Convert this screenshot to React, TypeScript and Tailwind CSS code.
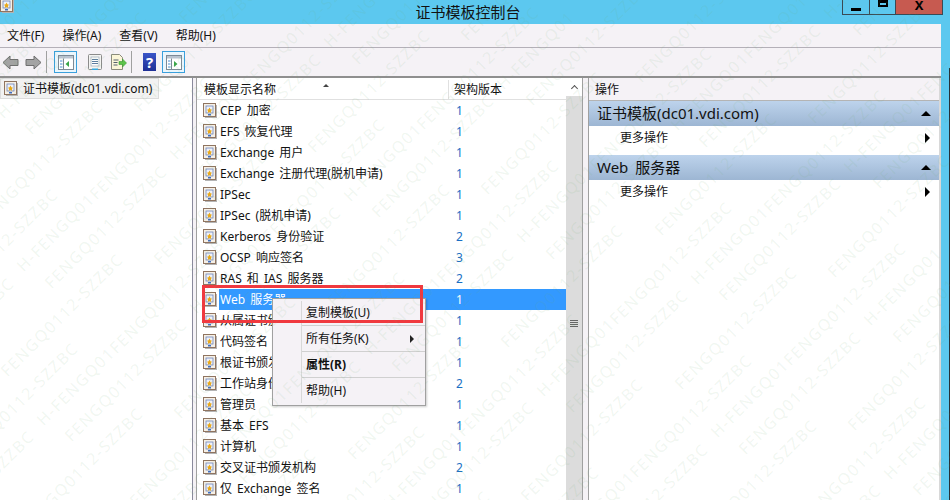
import React from "react";

const FONT = '"Noto Sans", "Noto Sans CJK SC", sans-serif';

const templates = [
  { name: "CEP 加密", ver: "1" },
  { name: "EFS 恢复代理", ver: "1" },
  { name: "Exchange 用户", ver: "1" },
  { name: "Exchange 注册代理(脱机申请)", ver: "1" },
  { name: "IPSec", ver: "1" },
  { name: "IPSec (脱机申请)", ver: "1" },
  { name: "Kerberos 身份验证", ver: "2" },
  { name: "OCSP 响应签名", ver: "3" },
  { name: "RAS 和 IAS 服务器", ver: "2" },
  { name: "Web 服务器", ver: "1", selected: true },
  { name: "从属证书颁发机构", ver: "1" },
  { name: "代码签名", ver: "1" },
  { name: "根证书颁发机构", ver: "1" },
  { name: "工作站身份验证", ver: "2" },
  { name: "管理员", ver: "1" },
  { name: "基本 EFS", ver: "1" },
  { name: "计算机", ver: "1" },
  { name: "交叉证书颁发机构", ver: "2" },
  { name: "仅 Exchange 签名", ver: "1" },
];

function TemplateIcon() {
  return (
    <svg width="14" height="15" viewBox="0 0 14 15" className="shrink-0">
      <rect x="2" y="2" width="12" height="13" fill="#b4b4b4" />
      <rect x="0.5" y="0.5" width="12" height="13" fill="#f6f0e6" stroke="#8f7460" />
      <rect x="3" y="3" width="7" height="7" fill="#eef1f8" stroke="#6d86bc" strokeWidth="0.8" />
      <path d="M6.500 4.500l.9 1.800 1.600.4-1.100 1.200.4 2-1.800-1-1.800 1 .4-2L4 6.700l1.600-.4z" fill="#e9a91a" />
      <rect x="5" y="11" width="3" height="1.500" fill="#3f6fc0" />
    </svg>
  );
}

function ArrowIcon({ flip }: { flip?: boolean }) {
  return (
    <svg width="17" height="15" viewBox="0 0 17 15" style={flip ? { transform: "scaleX(-1)" } : undefined}>
      <path d="M1 7.500L8 1v3.500h8v6H8V14z" fill="#a3a3a3" stroke="#6f6f6f" />
    </svg>
  );
}

function PaneIcon({ side }: { side: "left" | "right" }) {
  return (
    <svg width="16" height="15" viewBox="0 0 16 15">
      <rect x="0.500" y="0.500" width="15" height="14" fill="#fff" stroke="#7d8a96" />
      <rect x="1" y="1" width="14" height="2.500" fill="#b9c4d0" />
      <path d="M5.500 3.500v11" stroke="#7d8a96" />
      <path d="M2 6h2.500M2 9h2.500M2 12h2.500" stroke="#4c8ed0" />
      {side === "left" ? <path d="M11 6v6l-3.500-3z" fill="#3aa648" /> : <path d="M8 6v6l3.500-3z" fill="#3aa648" />}
    </svg>
  );
}

function ToggleButton({ side }: { side: "left" | "right" }) {
  return (
    <div className="flex h-[22px] w-[23px] items-center justify-center border border-[#3aa0dc] bg-[#eaf6fd]">
      <PaneIcon side={side} />
    </div>
  );
}

function SheetIcon() {
  return (
    <svg width="16" height="17" viewBox="0 0 16 17">
      <rect x="1.500" y="0.500" width="13" height="15" rx="1" fill="#f4f4f2" stroke="#8b8b8b" />
      <rect x="4" y="3" width="8" height="9" fill="#fff" stroke="#9aa7b5" strokeWidth="0.7" />
      <path d="M5 5.500h6M5 7.500h6M5 9.500h6" stroke="#5d7da0" />
      <rect x="5" y="14.500" width="6" height="1.500" fill="#36a9e1" />
    </svg>
  );
}

function ExportIcon() {
  return (
    <svg width="17" height="17" viewBox="0 0 17 17">
      <path d="M1.500.5h8l3 3v12h-11z" fill="#fbf6d8" stroke="#8b8b7c" />
      <path d="M3.500 6h5M3.500 8.500h4M3.500 11h4" stroke="#55606c" />
      <path d="M9 7.500h3.500V5l4 4-4 4v-2.500H9z" fill="#5ec44a" stroke="#3d9a34" strokeWidth="0.6" />
    </svg>
  );
}

function HelpIcon() {
  return (
    <div className="flex h-[18px] w-[13px] items-center justify-center bg-gradient-to-b from-[#3a55c8] to-[#1f2f95] text-[15px] leading-none font-bold text-white">
      ?
    </div>
  );
}

function ActionGroup({ title }: { title: string }) {
  return (
    <div>
      <div className="flex h-[25px] items-center justify-between bg-gradient-to-b from-[#bdd3ec] to-[#9db6d3] pr-[8px] pl-[8px] text-[15px] text-[#111] [word-spacing:3px]">
        <span>{title}</span>
        <span className="h-0 w-0 border-x-[5px] border-b-[5px] border-x-transparent border-b-black" />
      </div>
      <div className="flex h-[29px] items-center justify-between pr-[9px] pb-[6px] pl-[31px] text-[12px] text-[#111]">
        <span>更多操作</span>
        <span className="h-0 w-0 border-y-[5px] border-l-[5px] border-y-transparent border-l-black" />
      </div>
    </div>
  );
}

// anchor points are the start of each text, measured on the screenshot
const marks: { x: number; y: number; text: string }[] = [];
for (let i = -8; i <= 8; i++) {
  for (let j = -9; j <= 9; j++) {
    const dx = 64.5 * i + 109 * j;
    const dy = 65 * i - 23.5 * j;
    marks.push({ x: 727 + dx, y: 303 + dy, text: "FENGQ0112-SZZBC" });
    if ((i - j + 30) % 3 === 0) marks.push({ x: 872 + dx, y: 328 + dy, text: "H-FENGQ01" });
  }
}
const visibleMarks = marks.filter((m) => m.x > -120 && m.x < 940 && m.y > 20 && m.y < 620);

function Watermark() {
  return (
    <div className="pointer-events-none absolute inset-0 overflow-hidden">
      {visibleMarks.map((m, i) => (
        <span
          key={i}
          className="absolute origin-bottom-left -rotate-45 text-[16px] leading-none tracking-[1.5px] whitespace-nowrap text-[#6fae6f]/10"
          style={{ left: m.x, top: m.y - 16 }}
        >
          {m.text}
        </span>
      ))}
    </div>
  );
}

export default function App() {
  return (
    <div className="relative h-[500px] w-[950px] overflow-hidden bg-[#5cc8ef]" style={{ fontFamily: FONT }}>
      {/* title bar */}
      <div className="relative h-6">
        <div className="absolute top-[-2px] left-0">
          <TemplateIcon />
        </div>
        <div className="flex h-6 w-[936px] items-center justify-center text-[15px] text-[#111]">证书模板控制台</div>
        <div className="absolute top-0 right-[7px] flex h-[15px] border-x border-b border-[#3a4a55]">
          <div className="flex w-[27px] items-center justify-center border-r border-[#3a4a55]">
            <span className="mt-[5px] h-[3px] w-[10px] bg-black" />
          </div>
          <div className="flex w-[26px] justify-center border-r border-[#3a4a55]">
            <span className="h-[7px] w-[10px] border-2 border-t-[3px] border-black" />
          </div>
          <div className="flex w-[46px] items-center justify-center overflow-hidden bg-[#c75a50] text-[13px] leading-none font-bold text-black">
            <span className="-translate-y-[2px]">X</span>
          </div>
        </div>
      </div>

      <div className="w-[941px]">
        {/* menu bar */}
        <div className="flex h-[24px] items-center gap-[18px] border-b border-[#b4b0b8] bg-[#f5f2f6] pl-[7px] text-[12px] text-[#111]">
          <span>文件(F)</span>
          <span>操作(A)</span>
          <span>查看(V)</span>
          <span>帮助(H)</span>
        </div>

        {/* toolbar */}
        <div className="flex h-[30px] items-center border-b-2 border-[#8f8f8f] bg-[#f5f2f6] pl-[2px]">
          <ArrowIcon />
          <div className="ml-[6px]">
            <ArrowIcon flip />
          </div>
          <div className="ml-[4px] h-[22px] w-px bg-[#a0a0a0]" />
          <div className="ml-[7px]">
            <ToggleButton side="left" />
          </div>
          <div className="ml-[10px]">
            <SheetIcon />
          </div>
          <div className="ml-[7px]">
            <ExportIcon />
          </div>
          <div className="ml-[4px] h-[22px] w-px bg-[#a0a0a0]" />
          <div className="ml-[11px]">
            <HelpIcon />
          </div>
          <div className="ml-[6px]">
            <ToggleButton side="right" />
          </div>
        </div>

        {/* panes */}
        <div className="flex h-[422px] bg-[#f5f2f6]">
          <div className="w-[193px] shrink-0 border-r border-[#8a8a9c] bg-white">
            <div className="flex h-[21px] w-[159px] items-center gap-[5px] border border-[#dcdcdc] bg-[#f2f2f2] pl-[3px] text-[12px] text-[#111]">
              <TemplateIcon />
              <span className="whitespace-nowrap">证书模板(dc01.vdi.com)</span>
            </div>
          </div>

          <div className="ml-[3px] flex w-[387px] shrink-0 border-x border-[#a0a0a0] bg-white">
            <div className="w-[369px] shrink-0">
              <div className="flex h-[22px] border-b border-[#e0e0e0] pt-[2px] text-[12px] text-[#111]">
                <div className="relative flex w-[252px] items-center border-r border-[#e0e0e0] pl-[7px]">
                  模板显示名称
                  <span className="absolute top-[4px] left-[126px] h-0 w-0 border-x-[3px] border-b-[3px] border-x-transparent border-b-[#444]" />
                </div>
                <div className="flex items-center pl-[5px]">架构版本</div>
              </div>
              <div>
                {templates.map((t) => (
                  <div key={t.name} className="flex h-[21px] items-center text-[12px] text-[#111] [word-spacing:2px]">
                    <div className="ml-[6px] flex w-[16px] shrink-0">
                      <TemplateIcon />
                    </div>
                    <div
                      className={
                        t.selected
                          ? "flex h-full flex-1 items-center bg-[#3399ff] text-white"
                          : "flex h-full flex-1 items-center"
                      }
                    >
                      <span className="w-[237px] shrink-0 pl-[1px] whitespace-nowrap">{t.name}</span>
                      <span className={t.selected ? "text-white" : "text-[#1a6fc4]"}>{t.ver}</span>
                    </div>
                  </div>
                ))}
              </div>
            </div>
            <div className="flex w-[16px] shrink-0 flex-col bg-[#dcdcdc]">
              <div className="flex h-[18px] items-center justify-center bg-white">
                <span className="h-[5px] w-[5px] translate-y-[1px] rotate-45 border-t border-l border-[#555]" />
              </div>
              <div className="mt-[224px] flex flex-col items-center gap-[1px]">
                <span className="h-px w-[8px] bg-[#666]" />
                <span className="h-px w-[8px] bg-[#666]" />
                <span className="h-px w-[8px] bg-[#666]" />
                <span className="h-px w-[8px] bg-[#666]" />
              </div>
            </div>
          </div>

          <div className="ml-[5px] flex-1 border-r-2 border-l border-r-[#d8d8d8] border-l-[#a0a0a0] bg-white">
            <div className="flex h-[23px] items-center border-b border-[#b4b4b4] bg-[#f5f2f6] pt-[1px] pl-[6px] text-[12px] text-[#111]">
              操作
            </div>
            <ActionGroup title="证书模板(dc01.vdi.com)" />
            <ActionGroup title="Web 服务器" />
          </div>
        </div>
      </div>

      {/* edge of the window behind */}
      <div className="absolute top-[68px] right-0 bottom-0 w-px bg-[#26323a]" />

      {/* context menu */}
      <div className="absolute top-[298px] left-[272px] w-[154px] border border-[#a0a0a0] bg-[#f5f2f6] py-[2px] text-[12px] text-[#111] shadow-[1px_1px_2px_rgba(0,0,0,0.2)]">
        <div className="absolute top-[2px] bottom-[2px] left-[28px] w-px bg-[#d8d8d8]" />
        <div className="flex h-[24px] items-center pl-[33px]">复制模板(U)</div>
        <div className="ml-[29px] h-px bg-[#d0d0d0]" />
        <div className="relative flex h-[25px] items-center pl-[33px]">
          所有任务(K)
          <span className="absolute right-[11px] h-0 w-0 border-y-[4px] border-l-[4px] border-y-transparent border-l-[#222]" />
        </div>
        <div className="ml-[29px] h-px bg-[#d0d0d0]" />
        <div className="flex h-[25px] items-center pl-[33px] font-bold">属性(R)</div>
        <div className="ml-[29px] h-px bg-[#d0d0d0]" />
        <div className="flex h-[25px] items-center pl-[33px]">帮助(H)</div>
      </div>

      {/* red annotation */}
      <div className="absolute top-[285px] left-[202px] h-[38px] w-[221px] border-[3px] border-[#f0393f]" />

      <Watermark />
    </div>
  );
}
